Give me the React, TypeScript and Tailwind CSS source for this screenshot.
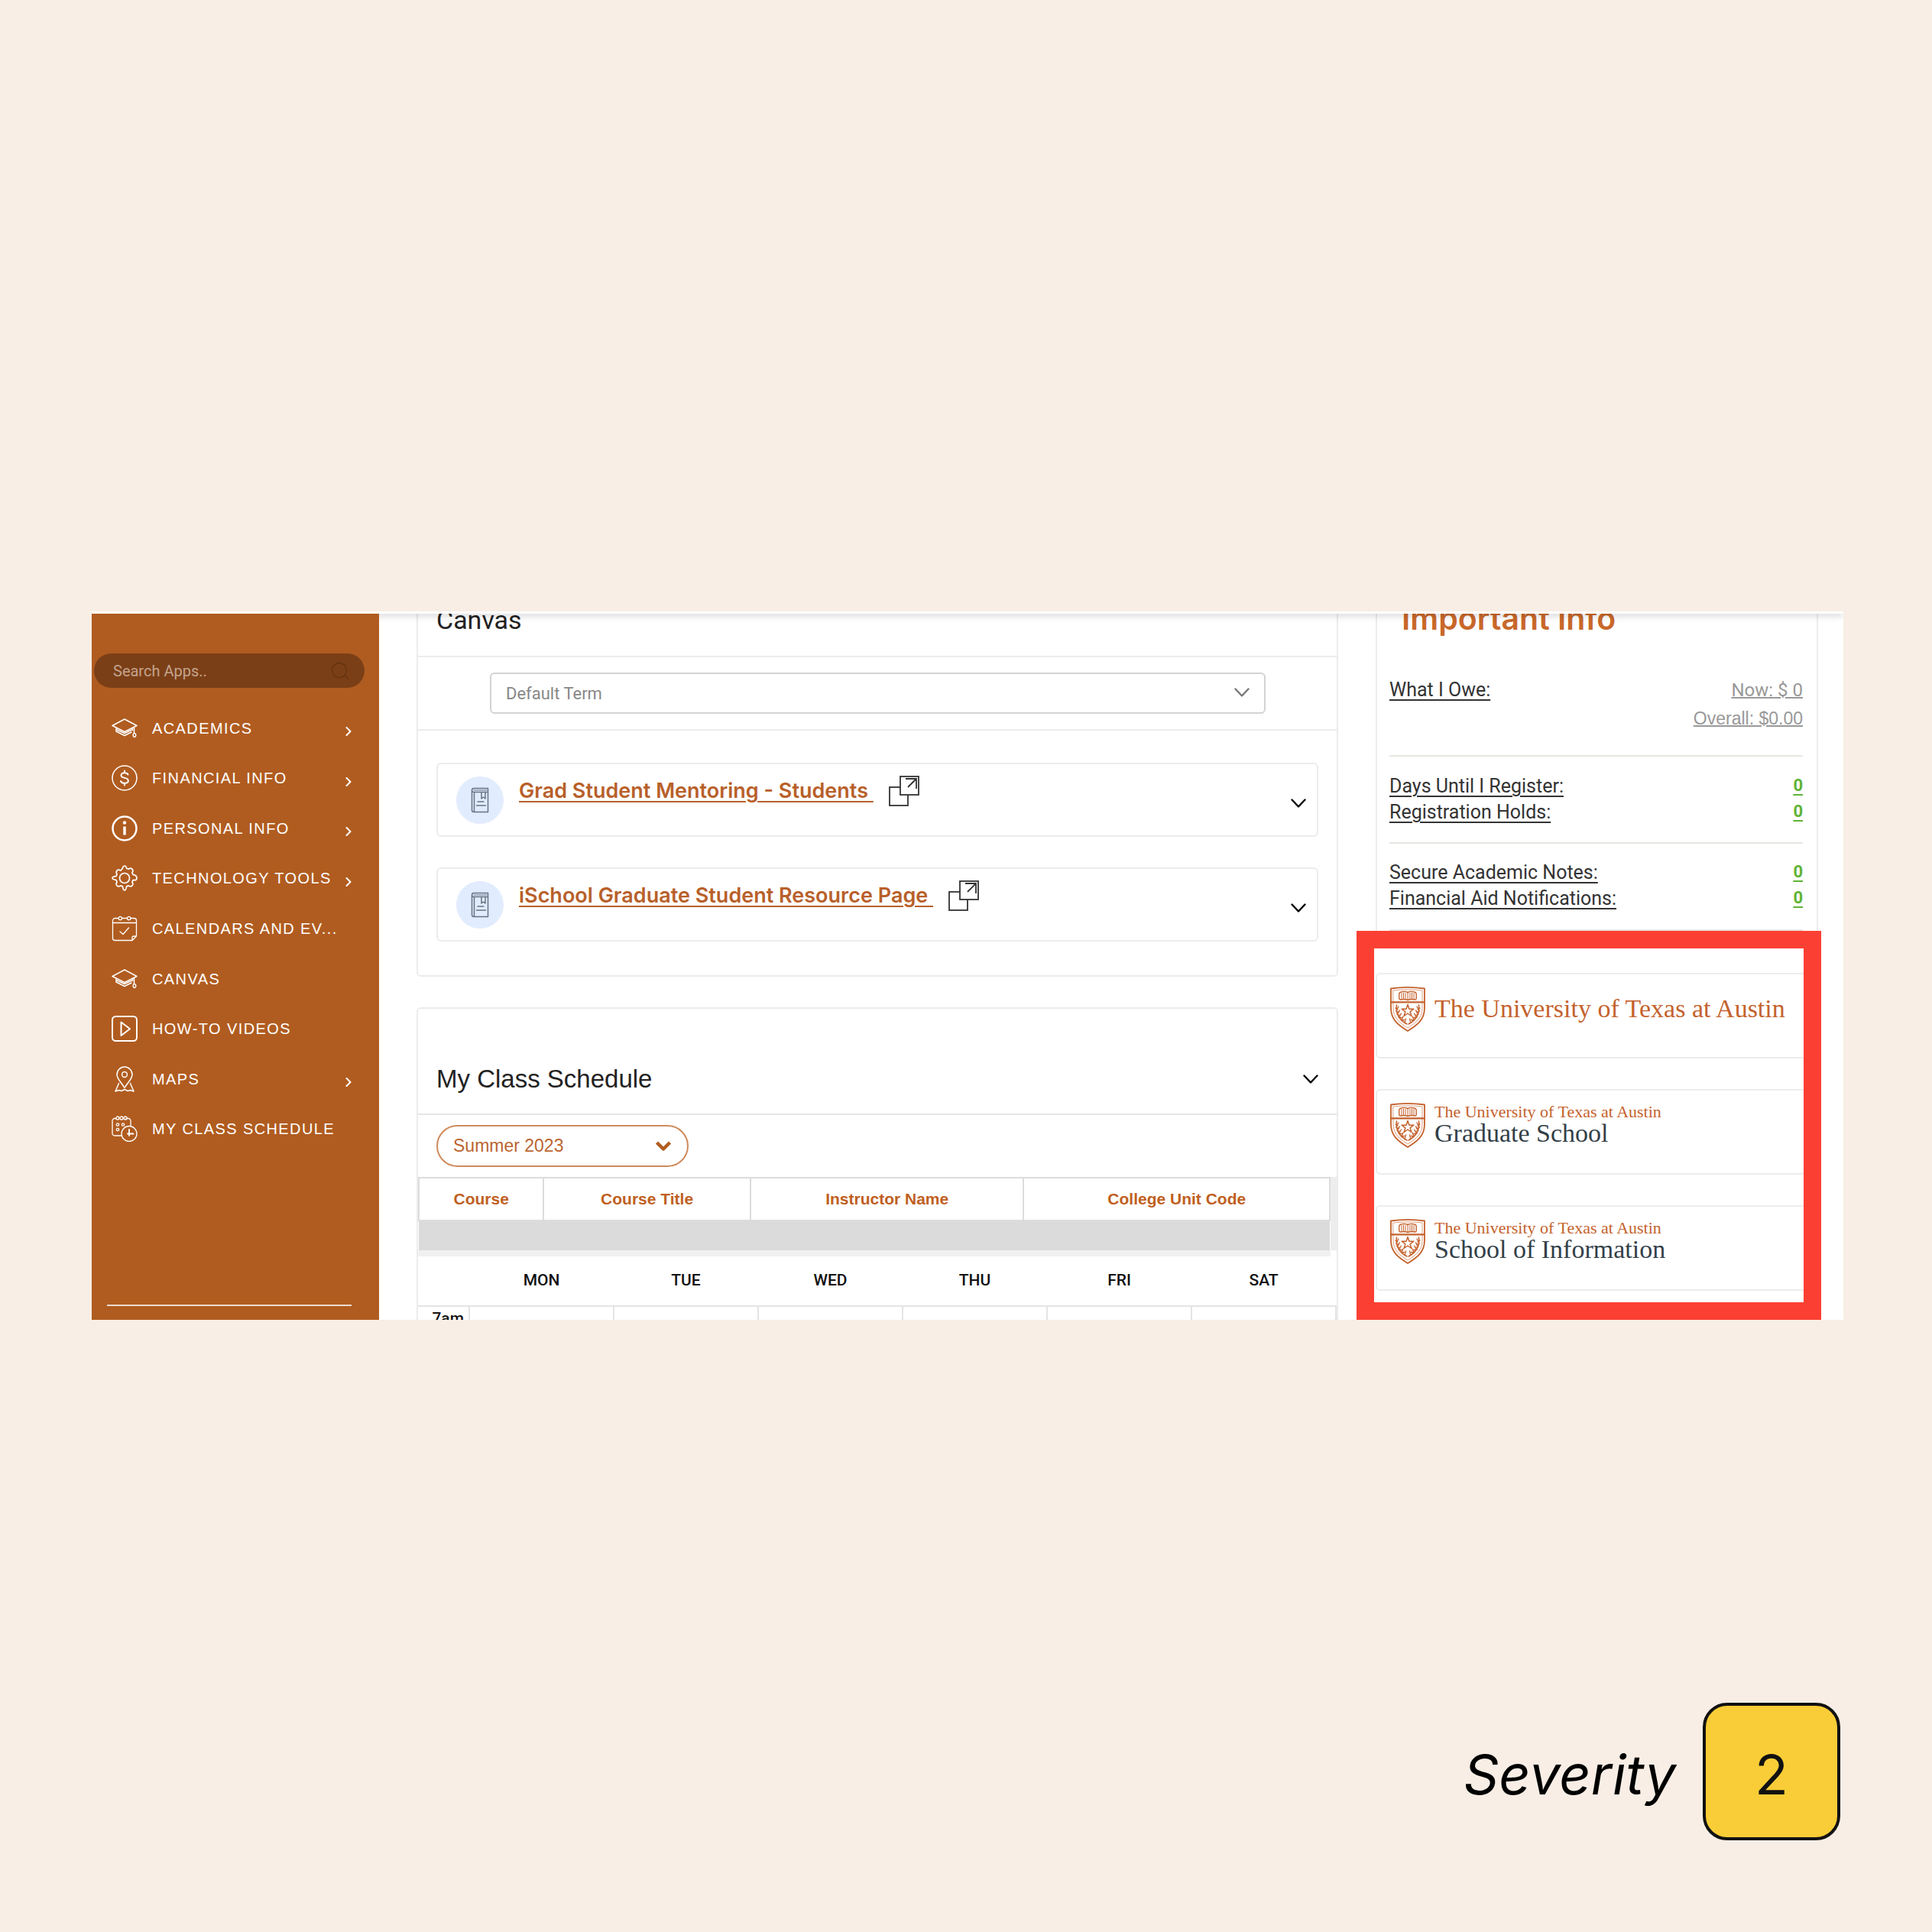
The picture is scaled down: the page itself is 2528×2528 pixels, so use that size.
import React from "react";

type IconProps = { className?: string };

const stroke = {
  fill: "none",
  stroke: "currentColor",
  strokeLinecap: "round" as const,
  strokeLinejoin: "round" as const,
};

const CapIcon = () => (
  <svg viewBox="0 0 34 34" className="size-[34px]" {...stroke} strokeWidth={1.5} aria-hidden="true">
    <path d="M17 5 33 13.5 17 21.5 1 13.5Z" />
    <path d="M6 16.5v4.500l11 5.500 9-4.500M6 18.500l11 5 9.500-4.500" />
    <path d="M29.500 15.500v8M30 23.500a1.800 2.500 0 1 1-.1 0" />
    <path d="M27.500 16.500v3" />
  </svg>
);

const DollarIcon = () => (
  <svg viewBox="0 0 34 34" className="size-[34px]" {...stroke} strokeWidth={1.5} aria-hidden="true">
    <circle cx="17" cy="17" r="16" />
    <path d="M21.500 12.500c-.8-1.600-2.300-2.300-4.500-2.300-2.700 0-4.500 1.200-4.500 3.200 0 4.700 9.300 2.300 9.300 7 0 2.100-2 3.400-4.800 3.400-2.500 0-4.300-.9-5-2.700M17 7.500v2.700M17 23.800v2.700" strokeWidth={2} />
  </svg>
);

const InfoIcon = () => (
  <svg viewBox="0 0 34 34" className="size-[34px]" {...stroke} strokeWidth={2.5} aria-hidden="true">
    <circle cx="17" cy="17" r="15.500" />
    <path d="M17 14.500v11" strokeWidth={3.5} strokeLinecap="butt" />
    <circle cx="17" cy="9.500" r="2.200" fill="currentColor" stroke="none" />
  </svg>
);

const GearIcon = () => (
  <svg viewBox="0 0 34 34" className="size-[34px]" {...stroke} strokeWidth={1.7} aria-hidden="true">
    <circle cx="17" cy="17" r="6.500" />
    <path d="M14.400 4.200c.3-1.800.9-3.200 2.600-3.200s2.300 1.400 2.600 3.200l2.500 1c1.500-1.100 3.100-1.700 4.800 0s1.100 3.300 0 4.800l1.100 2.400c1.800.3 5 .9 5 4.600s-3.200 2.300-5 2.600l-1.100 2.500c1.100 1.500 1.700 3.100 0 4.800s-3.300 1.100-4.800 0l-2.500 1c-.3 1.800-.9 5.100-2.600 5.100s-2.300-3.300-2.600-5.100l-2.500-1c-1.500 1.100-3.100 1.700-4.800 0s-1.100-3.300 0-4.800l-1-2.500C4.300 19.300 1 18.700 1 17s3.300-2.300 5.100-2.600l1-2.400c-1.100-1.500-1.700-3.100 0-4.800s3.300-1.100 4.800 0Z" />
  </svg>
);

const CalendarIcon = () => (
  <svg viewBox="0 0 34 34" className="size-[34px]" {...stroke} strokeWidth={1.3} aria-hidden="true">
    <path d="M9 3.500H4.500a3 3 0 0 0-3 3v23a3 3 0 0 0 3 3H27l5.500-5.500V6.500a3 3 0 0 0-3-3H25M13.500 3.500h7M1.500 9.500h31M27 32.500v-3.500a2 2 0 0 1 2-2h3.500" />
    <circle cx="11.300" cy="3.500" r="2.200" />
    <circle cx="22.700" cy="3.500" r="2.200" />
    <path d="m11 21 4 3.500 7.500-8.500" />
  </svg>
);

const VideoIcon = () => (
  <svg viewBox="0 0 34 34" className="size-[34px]" {...stroke} strokeWidth={2} aria-hidden="true">
    <rect x="1" y="1" width="32" height="32" rx="4.500" />
    <path d="M12.500 8.500v17.500L24 17.200Z" />
  </svg>
);

const MapPinIcon = () => (
  <svg viewBox="0 0 34 34" className="size-[34px]" {...stroke} strokeWidth={1.5} aria-hidden="true">
    <path d="M17 28.500C13 21.500 7 17 7 11a10 10 0 0 1 20 0c0 6-6 10.500-10 17.500Z" />
    <circle cx="17" cy="11" r="3.400" />
    <path d="M9.500 22.500 5 33l4.500-1.500 3.500 1 4-2 4 2 3.500-1L29 33l-4.500-10.500" />
  </svg>
);

const ScheduleIcon = () => (
  <svg viewBox="0 0 34 34" className="size-[34px]" {...stroke} strokeWidth={1.3} aria-hidden="true">
    <path d="M13.500 26H4a3 3 0 0 1-3-3V6.500a3 3 0 0 1 3-3h2M19 3.500h3a3 3 0 0 1 3 3v6" />
    <circle cx="8" cy="3" r="2" />
    <circle cx="13" cy="3" r="2" />
    <circle cx="18" cy="3" r="2" />
    <circle cx="8" cy="11.500" r="1.700" />
    <circle cx="15" cy="11.500" r="1.700" />
    <circle cx="8" cy="18" r="1.700" />
    <circle cx="23" cy="23.500" r="10" />
    <path d="M23 18v5.500h5.500M23 26v-2.500h-2" strokeWidth={1.8} />
  </svg>
);

const ChevronRight = () => (
  <svg viewBox="0 0 8 12" className="mt-[9px] h-3 w-2 shrink-0" {...stroke} strokeWidth={2} aria-hidden="true">
    <path d="m1.500 1 5 5-5 5" />
  </svg>
);

const ChevronDown = ({ className = "" }: IconProps) => (
  <svg viewBox="0 0 20 12" className={`h-3 w-5 shrink-0 ${className}`} {...stroke} strokeWidth={2.4} aria-hidden="true">
    <path d="m1.500 1.500 8.500 9 8.500-9" />
  </svg>
);

const SearchIcon = () => (
  <svg viewBox="0 0 24 24" className="size-6 shrink-0 text-[#63330f]" {...stroke} strokeWidth={1.3} aria-hidden="true">
    <circle cx="11" cy="11" r="9.500" />
    <path d="m18 18 5 4.500" />
  </svg>
);

const BookIcon = () => (
  <svg viewBox="0 0 24 34" className="h-[34px] w-6" {...stroke} stroke="#6a7482" strokeWidth={1.5} aria-hidden="true">
    <path d="M4 1.500h18.500v5H4a2.500 2.500 0 0 1 0-5ZM1.500 4.500V30a2.500 2.500 0 0 0 2.500 2.500h18.500v-26M4.500 6.500v26" />
    <path d="M14 6.500v8.500l2.500-2 2.500 2V6.500M9 19h8M7.500 24h12" />
    <path d="M4 4h17" strokeWidth={1} />
  </svg>
);

const ExternalIcon = () => (
  <svg viewBox="0 0 40 40" className="size-10" fill="#fff" stroke="#333" strokeWidth={1.8} aria-hidden="true">
    <rect x="1" y="15" width="24" height="24" />
    <rect x="15" y="1" width="24" height="24" />
    <path d="m25 15 11-11M22 4h14v13" fill="none" />
  </svg>
);

const ShieldLogo = () => (
  <svg viewBox="0 0 46 59" className="h-[59px] w-[46px] shrink-0" {...stroke} stroke="#c4622d" aria-hidden="true">
    <path d="M1 2.500C15 .5 31 .5 45 2.500V28c0 15-9 22-22 30C10 50 1 43 1 28Z" strokeWidth={1.8} />
    <path d="M4 5C17 3.500 29 3.500 42 5v23c0 13-8 19-19 26C12 47 4 41 4 28Z" strokeWidth={0.6} />
    <path d="M1 20.300h44" strokeWidth={2.2} />
    <path d="M13 7.500c3.500-1.500 7-1.500 10 0 3-1.500 6.500-1.500 10 0l1.200 1.500v7L33 17c-3.500-.8-7-.8-10 .5-3-1.300-6.500-1.300-10-.5l-1.200-1v-7Z" strokeWidth={1.4} />
    <path d="M15 8.500v7M17.500 8v7.500M20 8.500v7M23 8v9M26 8.500v7M28.500 8v7.500M31 8.500v7" strokeWidth={1} />
    <path d="m23 23.500 1.900 5.700h6l-4.800 3.600 1.800 5.700-4.900-3.500-4.900 3.500 1.800-5.700-4.800-3.600h6Z" strokeWidth={1.5} />
    <path d="M8.500 24c-1.500 12 4 20 13.500 25M37.500 24c1.500 12-4 20-13.500 25" strokeWidth={1.6} />
    <path d="M7 28l3 2M7.500 32l4 2M9 36l4 1.500M11 40l4 .5M15 44l3.500-.5M11 26l-2 4M12.500 31l-2.500 3.500M14.500 35l-2 3.500M17 39l-1.500 3.500M20.500 42l-1 4M39 28l-3 2M38.500 32l-4 2M37 36l-4 1.500M35 40l-4 .5M31 44l-3.500-.5M35 26l2 4M33.500 31l2.500 3.500M31.500 35l2 3.500M29 39l1.500 3.500M25.500 42l1 4" strokeWidth={1.3} />
  </svg>
);

const navItems = [
  { label: "ACADEMICS", icon: <CapIcon />, more: true },
  { label: "FINANCIAL INFO", icon: <DollarIcon />, more: true },
  { label: "PERSONAL INFO", icon: <InfoIcon />, more: true },
  { label: "TECHNOLOGY TOOLS", icon: <GearIcon />, more: true },
  { label: "CALENDARS AND EV...", icon: <CalendarIcon />, more: false },
  { label: "CANVAS", icon: <CapIcon />, more: false },
  { label: "HOW-TO VIDEOS", icon: <VideoIcon />, more: false },
  { label: "MAPS", icon: <MapPinIcon />, more: true },
  { label: "MY CLASS SCHEDULE", icon: <ScheduleIcon />, more: false },
];

function Sidebar() {
  return (
    <aside className="relative z-20 flex w-[376px] shrink-0 flex-col bg-[#b05c20]">
      <div className="mt-[52px] mr-[19px] ml-[3px] flex h-[45px] items-center rounded-full bg-[#7b3f17] pr-5 pl-[25px]">
        <input
          type="text"
          aria-label="Search apps"
          placeholder="Search Apps.."
          className="min-w-0 flex-1 bg-transparent font-[Roboto,sans-serif] text-[20px] text-white outline-none placeholder:text-[#c3a48e]"
        />
        <SearchIcon />
      </div>
      <nav className="mt-5 grid h-[590px] grid-rows-9 pr-9 pl-[26px] text-white">
        {navItems.map((item) => (
          <a key={item.label} href="#" className="flex items-center">
            <span className="mr-[19px] shrink-0">{item.icon}</span>
            <span className="flex-1 text-[20px] tracking-[0.07em] whitespace-nowrap">{item.label}</span>
            {item.more && <ChevronRight />}
          </a>
        ))}
      </nav>
      <hr className="mt-auto mr-9 mb-[18px] ml-5 border-t-2 border-[#ecd9cb]" />
    </aside>
  );
}

function CourseCard({ title }: { title: string }) {
  return (
    <article className="flex h-[97px] items-center rounded-md border-2 border-[#ececec] pr-[14px] pl-6">
      <span className="flex size-[62px] shrink-0 items-center justify-center rounded-full bg-[#e1ecfe]">
        <BookIcon />
      </span>
      <div className="mb-6 ml-5 flex items-center gap-5">
        <a href="#" className="font-[Inter,sans-serif] text-[27px] leading-8 font-semibold whitespace-pre text-[#b8602a] underline decoration-2 underline-offset-4">
          {title + " "}
        </a>
        <a href="#" aria-label={"Open " + title + " in a new window"}>
          <ExternalIcon />
        </a>
      </div>
      <button type="button" aria-label={"Expand " + title} className="mt-2 ml-auto text-black">
        <ChevronDown />
      </button>
    </article>
  );
}

function CanvasPanel() {
  return (
    <section className="rounded-b-md border-2 border-t-0 border-[#ececec]">
      <div className="h-[57px] overflow-hidden border-b-2 border-[#ececec] pl-6">
        <h2 className="-mt-2 font-[Roboto,sans-serif] text-[34px] leading-8 text-[#222]">Canvas</h2>
      </div>
      <div className="border-b-2 border-[#ececec] py-5 pr-[93px] pl-[94px]">
        <div className="relative flex">
          <select aria-label="Term" className="h-[54px] flex-1 appearance-none rounded-md border-2 border-[#d3d3d3] bg-white px-[19px] font-[Roboto,sans-serif] text-[22px] text-[#888]">
            <option>Default Term</option>
          </select>
          <ChevronDown className="pointer-events-none absolute top-5 right-[21px] text-[#777]" />
        </div>
      </div>
      <div className="flex flex-col gap-10 px-6 pt-[42px] pb-11">
        <CourseCard title="Grad Student Mentoring - Students" />
        <CourseCard title="iSchool Graduate Student Resource Page" />
      </div>
    </section>
  );
}

const days = ["MON", "TUE", "WED", "THU", "FRI", "SAT"];

function SchedulePanel() {
  return (
    <section className="mt-10 rounded-t-md border-2 border-b-0 border-[#ececec]">
      <div className="flex h-[139px] items-center justify-between border-b-2 border-[#e6e6e6] pt-[46px] pr-6 pl-6">
        <h2 className="text-[33px] leading-10 text-[#222]">My Class Schedule</h2>
        <button type="button" aria-label="Expand schedule" className="text-black">
          <ChevronDown />
        </button>
      </div>
      <div className="px-6 py-[13px]">
        <div className="relative flex w-[330px]">
          <select aria-label="Semester" className="h-[55px] flex-1 appearance-none rounded-full border-2 border-[#cf8a5b] bg-white px-5 text-[23px] text-[#bb6530]">
            <option>Summer 2023</option>
          </select>
          <svg viewBox="0 0 22 15" className="pointer-events-none absolute top-5 right-[22px] h-[15px] w-[22px] text-[#b05c20]" {...stroke} strokeWidth={4.5} strokeLinecap="butt" aria-hidden="true">
            <path d="m2.500 3 8.500 8.500L19.500 3" />
          </svg>
        </div>
      </div>
      <div className="bg-[#ededed] pr-2">
        <table className="w-full table-fixed border-collapse bg-white text-[21px] text-[#bf5f22]">
          <colgroup>
            <col className="w-[13.7%]" />
            <col className="w-[22.7%]" />
            <col className="w-[30%]" />
            <col className="w-[33.6%]" />
          </colgroup>
          <thead>
            <tr className="h-[56px]">
              {["Course", "Course Title", "Instructor Name", "College Unit Code"].map((name) => (
                <th key={name} scope="col" className="border-2 border-[#dcdcdc] p-0 font-bold">{name}</th>
              ))}
            </tr>
          </thead>
          <tbody>
            <tr>
              <td colSpan={4} className="h-[39px] bg-[#dbdbdb] p-0" />
            </tr>
          </tbody>
        </table>
      </div>
      <div className="mr-2 h-2 bg-[#f0f0f0]" />
      <table className="w-full table-fixed border-collapse font-[Roboto,sans-serif] text-[21px] text-[#111]">
        <colgroup>
          <col className="w-[67px]" />
          {days.map((d) => <col key={d} />)}
        </colgroup>
        <thead>
          <tr className="h-[65px]">
            <td />
            {days.map((d) => (
              <th key={d} scope="col" className="p-0 font-medium">{d}</th>
            ))}
          </tr>
        </thead>
        <tbody>
          <tr>
            <th scope="row" className="border-t-2 border-r-2 border-[#e4e4e4] p-0 font-medium">
              <div className="h-[17px] overflow-hidden pr-1.5 text-right leading-[31px]">7am</div>
            </th>
            {days.map((d) => <td key={d} className="border-t-2 border-r-2 border-[#e4e4e4] p-0" />)}
          </tr>
        </tbody>
      </table>
    </section>
  );
}

function CountRow({ label }: { label: string }) {
  return (
    <div className="flex justify-between">
      <a href="#" className="underline decoration-2 underline-offset-4">{label}</a>
      <a href="#" className="text-[22px] leading-8 font-bold text-[#5fb336] underline decoration-2 underline-offset-4">0</a>
    </div>
  );
}

function InfoPanel() {
  return (
    <section className="border-x-2 border-[#ededed] pr-[18px] pl-4 font-[Roboto,sans-serif] text-[25px] leading-[34px] text-[#333]">
      <div className="h-[83px] overflow-hidden pl-4">
        <h2 className="-mt-3 font-[Inter,sans-serif] text-[41px] leading-9 font-semibold text-[#c9682a]">Important Info</h2>
      </div>
      <div className="flex items-start justify-between border-b-2 border-[#e8e6e1] pb-[27px]">
        <a href="#" className="underline decoration-2 underline-offset-4">What I Owe:</a>
        <div className="flex flex-col items-end text-[#999]">
          <a href="#" className="text-[24px] underline decoration-2">Now: $ 0</a>
          <a href="#" className="font-['Liberation_Sans',sans-serif] text-[23px] leading-[41px] underline decoration-2">Overall: $0.00</a>
        </div>
      </div>
      <div className="border-b-2 border-[#e8e6e1] py-[22px]">
        <CountRow label="Days Until I Register:" />
        <CountRow label="Registration Holds:" />
      </div>
      <div className="border-b-2 border-[#e8e6e1] pt-[21px] pb-[23px]">
        <CountRow label="Secure Academic Notes:" />
        <CountRow label="Financial Aid Notifications:" />
      </div>
    </section>
  );
}

const university = "The University of Texas at Austin";

function SchoolCard({ unit }: { unit?: string }) {
  return (
    <a href="#" className="flex h-[112px] items-start gap-3 rounded-md border-2 border-[#ececec] pt-4 pl-[17px] font-['Liberation_Serif',serif] text-[#c4622d]">
      <ShieldLogo />
      {unit ? (
        <span className="flex flex-col whitespace-nowrap">
          <span className="text-[22px] leading-6">{university}</span>
          <span className="text-[34px] leading-8 text-[#333f48]">{unit}</span>
        </span>
      ) : (
        <span className="text-[34px] leading-[58px] whitespace-nowrap">{university}</span>
      )}
    </a>
  );
}

export default function App() {
  return (
    <main className="flex min-h-screen flex-col bg-[#f8eee5] pt-[800px] pb-[120px] font-['Liberation_Sans',sans-serif]">
      <div className="mr-[116px] ml-[120px] overflow-hidden bg-white">
        <div className="relative z-10 h-[3px] bg-white shadow-[0_1px_10px_rgba(0,0,0,0.4)]" />
        <div className="flex">
          <Sidebar />
          <div className="mx-[49px] min-w-0 flex-1">
            <CanvasPanel />
            <SchedulePanel />
          </div>
          <div className="mr-[33px] flex w-[579px] shrink-0 flex-col">
            <InfoPanel />
            <div className="relative flex flex-1 flex-col gap-10 pt-[55px] pb-[38px]">
              <SchoolCard />
              <SchoolCard unit="Graduate School" />
              <SchoolCard unit="School of Information" />
              <div className="pointer-events-none absolute top-0 -right-1 bottom-0 -left-[25px] border-[23px] border-[#fb4033]" />
            </div>
          </div>
        </div>
      </div>
      <footer className="mt-auto flex items-center justify-end gap-[35px] pr-[120px] font-[Inter,sans-serif] text-[72px] leading-none">
        <span className="pt-2 text-black italic">Severity</span>
        <span className="flex size-[180px] items-center justify-center rounded-[32px] border-4 border-[#111] bg-[#f9cd37] pt-2 text-[#111]">2</span>
      </footer>
    </main>
  );
}
